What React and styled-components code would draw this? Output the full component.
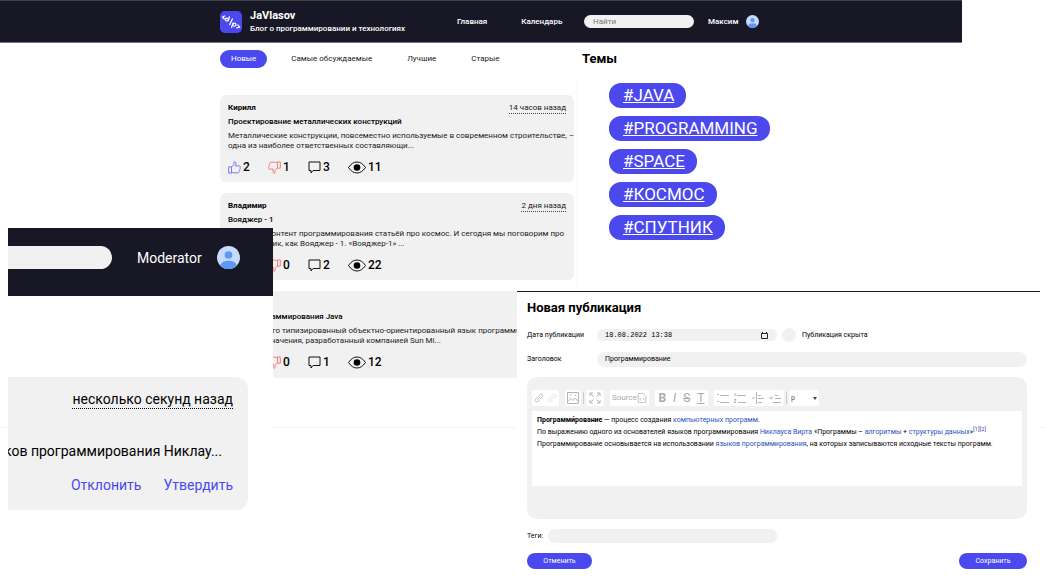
import React from "react";
import styled, { createGlobalStyle } from "styled-components";

const ink = "#181725";
const accent = "#4b49ed";
const soft = "#f1f1f1";

const GlobalStyle = createGlobalStyle`
  * { box-sizing: border-box; }
  body {
    margin: 0;
    background: #fff;
    color: #000;
    font-family: Roboto, "Liberation Sans", sans-serif;
    font-size: 8px;
    line-height: 10px;
  }
  button, input, select, textarea { font: inherit; color: inherit; }
  h1, h2, h3, p { margin: 0; }
`;

const Collage = styled.div`
  position: relative;
  min-height: 100vh;
  overflow: hidden;
`;

/* ---------- Blog window ---------- */

const BlogHeader = styled.header`
  display: flex;
  align-items: center;
  height: 43px;
  margin-right: 84px;
  padding-left: 220px;
  background: ${ink};
  border-top: 1px solid #3f3f46;
  border-bottom: 1px solid #77768a;
  color: #fff;
`;

const Brand = styled.div`
  display: flex;
  align-items: center;
  gap: 8px;
  width: 237px;
`;

const BrandName = styled.h1`
  font-size: 11px;
  line-height: 14px;
  font-weight: 700;
`;

const Tagline = styled.p`
  line-height: 12px;
  font-weight: 500;
`;

const Nav = styled.nav`
  display: flex;
  gap: 34px;
  width: 127px;
`;

const NavLink = styled.a`
  color: #fff;
  text-decoration: none;
  font-weight: 500;
`;

const Search = styled.input`
  width: 110px;
  height: 13px;
  padding: 0 9px;
  border: 0;
  border-radius: 7px;
  background: ${soft};
  &::placeholder { color: #77777f; opacity: 1; }
`;

const UserLink = styled.a`
  display: flex;
  align-items: center;
  gap: 8px;
  margin-left: 14px;
  color: #fff;
  text-decoration: none;
  font-weight: 500;
`;

const Columns = styled.div`
  display: flex;
  margin-right: 84px;
  padding: 7px 0 0 220px;
`;

const Feed = styled.main`
  width: 358px;
  flex: none;
`;

const Tabs = styled.div`
  display: flex;
  gap: 13px;
`;

const Tab = styled.button`
  height: 18px;
  padding: 0 11px;
  border: 0;
  border-radius: 9px;
  background: ${(p) => (p.$active ? accent : "transparent")};
  color: ${(p) => (p.$active ? "#fff" : "#222")};
`;

const Posts = styled.div`
  display: flex;
  flex-direction: column;
  gap: 11px;
  margin-top: 13px;
  padding: 14px 3px 49px 0;
  border-right: 1px solid #f6f6f6;
`;

const Post = styled.article`
  height: 87px;
  padding: 7px 8px;
  border-radius: 6px;
  background: ${soft};
`;

const PostHead = styled.div`
  display: flex;
  justify-content: space-between;
  min-height: 11px;
  line-height: 11px;
  font-weight: 700;
`;

const PostDate = styled.time`
  border-bottom: 1px dotted #444;
  font-weight: 400;
  color: #222;
`;

const PostTitle = styled.h2`
  margin-top: 3px;
  font-size: 8px;
  line-height: 10px;
  font-weight: 500;
`;

const PostText = styled.p`
  margin-top: 4px;
  line-height: 10px;
  color: #222;
  white-space: nowrap;
`;

const Stats = styled.div`
  display: flex;
  align-items: center;
  margin-top: 8px;
  font-size: 12px;
  line-height: 16px;
  font-weight: 500;
`;

const Stat = styled.span`
  display: flex;
  align-items: center;
  gap: 2px;
  width: 40px;
`;

const Themes = styled.aside`
  padding-left: 4px;
`;

const ThemesTitle = styled.h2`
  font-size: 13px;
  line-height: 18px;
  font-weight: 700;
`;

const TagList = styled.div`
  display: flex;
  flex-direction: column;
  align-items: flex-start;
  gap: 8px;
  padding: 15px 0 0 27px;
`;

const Tag = styled.a`
  padding: 0 12px 0 14px;
  border-radius: 12px;
  background: ${accent};
  color: #fff;
  font-size: 17px;
  line-height: 25px;
`;

const FooterLine = styled.div`
  border-top: 1px solid #f4f4f4;
`;

/* ---------- Moderation window ---------- */

const ModerationWindow = styled.section`
  position: absolute;
  left: 8px;
  top: 228px;
  width: 265px;
  padding-bottom: 20px;
  background: #fff;
  font-size: 14px;
  line-height: 18px;
`;

const ModerationBar = styled.header`
  display: flex;
  align-items: flex-start;
  height: 68px;
  padding-top: 18px;
  background: ${ink};
  color: #fff;
`;

const WideSearch = styled.input`
  width: 104px;
  height: 23px;
  border: 0;
  border-radius: 0 12px 12px 0;
  background: ${soft};
`;

const Moderator = styled.a`
  display: flex;
  align-items: center;
  gap: 15px;
  margin-left: 25px;
  color: #fff;
  text-decoration: none;
`;

const PendingPost = styled.article`
  display: flex;
  flex-direction: column;
  align-items: flex-end;
  margin: 81px 25px 0 0;
  padding: 14px 15px 16px 0;
  border-radius: 0 12px 12px 0;
  background: ${soft};
  overflow: hidden;
`;

const PendingDate = styled.time`
  border-bottom: 1px dotted #000;
  line-height: 17px;
`;

const PendingText = styled.p`
  align-self: stretch;
  display: flex;
  justify-content: flex-end;
  margin-top: 33px;
  padding-right: 11px;
  white-space: nowrap;
`;

const Decisions = styled.div`
  display: flex;
  gap: 22px;
  margin-top: 16px;
`;

const Decision = styled.button`
  padding: 0;
  border: 0;
  background: none;
  color: ${accent};
`;

/* ---------- Publication editor window ---------- */

const EditorWindow = styled.section`
  position: absolute;
  left: 517px;
  right: 6px;
  top: 291px;
  bottom: 0;
  padding: 8px 13px 0 10px;
  border-top: 1px solid ${ink};
  background: #fff;
  font-size: 7px;
`;

const EditorTitle = styled.h2`
  font-size: 13px;
  line-height: 16px;
  font-weight: 700;
`;

const FieldRow = styled.div`
  display: flex;
  align-items: center;
  height: 16px;
  margin-top: ${(p) => p.$top}px;
`;

const FieldLabel = styled.label`
  width: ${(p) => p.$width}px;
  flex: none;
`;

const Field = styled.input`
  width: ${(p) => p.$width || "100%"};
  height: ${(p) => p.$height || 15}px;
  padding: 0 8px;
  border: 0;
  border-radius: 8px;
  background: ${soft};
`;

const DateField = styled.div`
  display: flex;
  align-items: center;
  width: 180px;
  height: 12px;
  padding-right: 9px;
  border-radius: 6px;
  background: ${soft};
  input {
    flex: 1;
    min-width: 0;
    padding: 0 8px;
    border: 0;
    background: none;
    font-family: "Liberation Mono", monospace;
  }
`;

const HiddenToggle = styled.label`
  display: flex;
  align-items: center;
  gap: 6px;
  margin-left: 5px;
  input {
    appearance: none;
    width: 14px;
    height: 14px;
    margin: 0;
    border-radius: 50%;
    background: ${soft};
  }
`;

const RichEditor = styled.div`
  height: 142px;
  margin-top: 10px;
  padding: 13px 5px 0;
  border-radius: 10px;
  background: ${soft};
`;

const Toolbar = styled.div`
  display: flex;
  align-items: center;
  height: 16px;
  color: #aaa;
`;

const ToolGroup = styled.div`
  display: flex;
  align-items: center;
  justify-content: space-around;
  width: ${(p) => p.$width}px;
  height: 16px;
  margin-right: ${(p) => p.$gap || 0}px;
  border-radius: 2px;
  background: #fff;
`;

const Tool = styled.button`
  display: flex;
  align-items: center;
  padding: 0;
  border: 0;
  background: none;
  color: #aaa;
  font-size: ${(p) => p.$size || 8}px;
`;

const Divider = styled.span`
  width: 1px;
  height: 12px;
  margin-right: 2px;
  background: #ccc;
`;

const StyleSelect = styled.select`
  appearance: none;
  width: 18px;
  padding: 0;
  border: 0;
  background: none;
  color: #555;
`;

const Document = styled.div`
  height: 75px;
  margin-top: 5px;
  padding: 3px 5px;
  background: #fff;
  line-height: 12px;
  white-space: nowrap;
`;

const DocLink = styled.a`
  color: #2a52be;
  text-decoration: none;
`;

const Ref = styled.sup`
  line-height: 0;
  font-size: 6px;
  color: #4f3fb5;
`;

const Actions = styled.div`
  display: flex;
  justify-content: space-between;
  margin-top: 9px;
`;

const Action = styled.button`
  height: 16px;
  padding: 0;
  width: ${(p) => p.$width}px;
  border: 0;
  border-radius: 8px;
  background: ${accent};
  color: #fff;
`;

/* ---------- Drawings ---------- */

const Logo = () => (
  <svg width="22" height="22" viewBox="0 0 23 23" aria-hidden="true">
    <rect width="23" height="23" rx="5" fill={accent} />
    <g fill="none" stroke="#fff" strokeWidth="1.3" strokeLinecap="round" strokeLinejoin="round">
      <path d="M5 5.2 2.500 6.300 4.500 8.300" />
      <circle cx="7.200" cy="9" r="1.600" />
      <path d="M8.700 10 9.900 6M10.200 14.200 13 8.200" />
      <path d="M13.500 12.600 12.200 17" />
      <circle cx="15.100" cy="14.300" r="1.600" />
      <path d="M18.600 14.600 20.600 17 17.600 17.600" />
    </g>
  </svg>
);

const Avatar = ({ size }) => (
  <svg width={size} height={size} viewBox="0 0 24 24" aria-hidden="true">
    <clipPath id={`avatar${size}`}>
      <circle cx="12" cy="12" r="12" />
    </clipPath>
    <g clipPath={`url(#avatar${size})`}>
      <rect width="24" height="24" fill="#c7dbff" />
      <circle cx="12" cy="9.400" r="4" fill="#5b98f8" />
      <path d="M3.500 20.500C4.500 16.600 8 15.400 12 15.400s7.500 1.200 8.500 5.100L17 24H7Z" fill="#5b98f8" />
    </g>
  </svg>
);

const Thumb = ({ down }) => (
  <svg width="13" height="13" viewBox="0 0 13 13" aria-hidden="true">
    <g
      fill="none"
      stroke={down ? "#f07f7f" : "#7b7af0"}
      strokeLinejoin="round"
      transform={down ? "rotate(180 6.500 6.500)" : undefined}
    >
      <path d="M.7 5.800h2.800v6.300H.7ZM3.500 6.200 5.900 3.600 6 1.200C6.200.3 8 .5 8 2.300L7.600 4.900h3.900c1 0 .9 1.300.6 1.800.3.600.1 1.300-.3 1.600.2.700 0 1.300-.5 1.600.1.800-.3 1.900-1.300 1.900H5.600L3.500 11.200" />
    </g>
  </svg>
);

const Bubble = () => (
  <svg width="13" height="13" viewBox="0 0 13 13" aria-hidden="true">
    <path d="M1 1h11v8.500H5L3 12V9.500H1Z" fill="none" stroke="#111" strokeLinejoin="round" />
  </svg>
);

const Eye = () => (
  <svg width="18" height="13" viewBox="0 0 18 13" aria-hidden="true">
    <path d="M.5 6.500C3 2.800 5.800 1 9 1s6 1.800 8.500 5.500C15 10.200 12.200 12 9 12S3 10.200.5 6.500Z" fill="none" stroke="#111" />
    <circle cx="9" cy="6.500" r="3.300" fill="#000" />
  </svg>
);

const Calendar = () => (
  <svg width="7" height="7" viewBox="0 0 7 7" aria-hidden="true">
    <path d="M.5 1.500h6v5h-6ZM1.500 0v1.500M5.500 0v1.500" fill="none" stroke="#222" />
  </svg>
);

const toolPaths = {
  link: "M4 8 8 4M5 4 7.500 1.800C9 .5 11.500 2.500 10.200 4.500L8 7M7 8 4.500 10.200C2.500 11.500.5 9.500 1.800 7.500L4 5",
  image: "M.5.5h11v11H.5ZM1 9.500 4 6.500 6 8.500 8 6 11.500 9.500M3 3h1.500M8 3.500h1",
  expand: "M1 4V1H4M1 1 4.500 4.500M8 1h3V4M11 1 7.500 4.500M1 8v3H4M1 11 4.500 7.500M8 11h3V8M11 11 7.500 7.500",
  page: "M1.500.5H7L10.500 4V11.500H1.500ZM4.500 6 3.500 7.500 4.500 9M7.500 6 8.500 7.500 7.500 9",
  bullets: "M0 2.500H2M3 3.500H12M0 9.500H2M3 10.500H12",
  numbers: "M1 1V4M3 3.500H12M0 7.500H2L0 10.500H2M4 10.500H12",
  outdent: "M0 6H3M4.500 0V12M6 3.500H9M6 6.500H12M6 10.500H10",
  indent: "M0 6H3M2 4.500 3.500 6 2 7.500M6 3.500H9M6 6.500H12M4 10.500H12",
};

const ToolIcon = ({ name, faint, size = 12 }) => (
  <svg width={size} height={size} viewBox="0 0 12 12" aria-hidden="true">
    <path d={toolPaths[name]} fill="none" stroke={faint ? "#ddd" : "#b4b4b4"} />
  </svg>
);

/* ---------- Content ---------- */

const posts = [
  {
    author: "Кирилл",
    date: "14 часов назад",
    title: "Проектирование металлических конструкций",
    lines: [
      "Металлические конструкции, повсеместно используемые в современном строительстве, –",
      "одна из наиболее ответственных составляющи...",
    ],
    stats: [2, 1, 3, 11],
  },
  {
    author: "Владимир",
    date: "2 дня назад",
    title: "Вояджер - 1",
    lines: [
      "Разбавим контент программирования статьёй про космос. И сегодня мы поговорим про",
      "такой спутник, как Вояджер - 1. «Вояджер-1» ...",
    ],
    stats: [0, 0, 2, 22],
  },
  {
    title: "Язык программирования Java",
    lines: [
      "Java — строго типизированный объектно-ориентированный язык программирования",
      "общего назначения, разработанный компанией Sun Mi...",
    ],
    stats: [0, 0, 1, 12],
  },
];

const tags = ["#JAVA", "#PROGRAMMING", "#SPACE", "#КОСМОС", "#СПУТНИК"];

const PostCard = ({ post }) => (
  <Post>
    <PostHead>
      <span>{post.author}</span>
      {post.date && <PostDate>{post.date}</PostDate>}
    </PostHead>
    <PostTitle>{post.title}</PostTitle>
    <PostText>
      {post.lines[0]}
      <br />
      {post.lines[1]}
    </PostText>
    <Stats>
      <Stat><Thumb />{post.stats[0]}</Stat>
      <Stat><Thumb down />{post.stats[1]}</Stat>
      <Stat><Bubble />{post.stats[2]}</Stat>
      <Stat><Eye />{post.stats[3]}</Stat>
    </Stats>
  </Post>
);

const Blog = () => (
  <>
    <BlogHeader>
      <Brand>
        <Logo />
        <div>
          <BrandName>JaVlasov</BrandName>
          <Tagline>Блог о программировании и технологиях</Tagline>
        </div>
      </Brand>
      <Nav>
        <NavLink href="#main">Главная</NavLink>
        <NavLink href="#calendar">Календарь</NavLink>
      </Nav>
      <Search type="search" placeholder="Найти" aria-label="Найти" />
      <UserLink href="#profile">
        Максим
        <Avatar size={13} />
      </UserLink>
    </BlogHeader>
    <Columns>
      <Feed>
        <Tabs>
          <Tab $active>Новые</Tab>
          <Tab>Самые обсуждаемые</Tab>
          <Tab>Лучшие</Tab>
          <Tab>Старые</Tab>
        </Tabs>
        <Posts>
          {posts.map((post) => (
            <PostCard key={post.title} post={post} />
          ))}
        </Posts>
      </Feed>
      <Themes>
        <ThemesTitle>Темы</ThemesTitle>
        <TagList>
          {tags.map((tag) => (
            <Tag key={tag} href="#tag">{tag}</Tag>
          ))}
        </TagList>
      </Themes>
    </Columns>
    <FooterLine />
  </>
);

const Moderation = () => (
  <ModerationWindow>
    <ModerationBar>
      <WideSearch type="search" aria-label="Поиск" />
      <Moderator href="#moderator">
        Moderator
        <Avatar size={23} />
      </Moderator>
    </ModerationBar>
    <PendingPost>
      <PendingDate>несколько секунд назад</PendingDate>
      <PendingText>ков программирования Никлау...</PendingText>
      <Decisions>
        <Decision>Отклонить</Decision>
        <Decision>Утвердить</Decision>
      </Decisions>
    </PendingPost>
  </ModerationWindow>
);

const Editor = () => (
  <EditorWindow>
    <EditorTitle>Новая публикация</EditorTitle>
    <FieldRow $top={11}>
      <FieldLabel htmlFor="date" $width={70}>Дата публикации</FieldLabel>
      <DateField>
        <input id="date" defaultValue="18.08.2022 13:38" />
        <Calendar />
      </DateField>
      <HiddenToggle>
        <input type="checkbox" />
        Публикация скрыта
      </HiddenToggle>
    </FieldRow>
    <FieldRow $top={8}>
      <FieldLabel htmlFor="title" $width={70}>Заголовок</FieldLabel>
      <Field id="title" defaultValue="Программирование" />
    </FieldRow>
    <RichEditor>
      <Toolbar>
        <ToolGroup $width={27} $gap={6}>
          <Tool aria-label="Ссылка"><ToolIcon name="link" size={10} /></Tool>
          <Tool aria-label="Убрать ссылку"><ToolIcon name="link" size={10} faint /></Tool>
        </ToolGroup>
        <ToolGroup $width={16} $gap={2}>
          <Tool aria-label="Изображение"><ToolIcon name="image" /></Tool>
        </ToolGroup>
        <Divider />
        <ToolGroup $width={18} $gap={6}>
          <Tool aria-label="Развернуть"><ToolIcon name="expand" /></Tool>
        </ToolGroup>
        <ToolGroup $width={39} $gap={6}>
          <Tool>Source<ToolIcon name="page" size={10} /></Tool>
        </ToolGroup>
        <ToolGroup $width={53} $gap={6}>
          <Tool $size={12}><b>B</b></Tool>
          <Tool $size={12}><i>I</i></Tool>
          <Tool $size={12}><s>S</s></Tool>
          <Tool $size={12}><u>T</u></Tool>
        </ToolGroup>
        <ToolGroup $width={70} $gap={2}>
          <Tool aria-label="Маркеры"><ToolIcon name="bullets" /></Tool>
          <Tool aria-label="Нумерация"><ToolIcon name="numbers" /></Tool>
          <Tool aria-label="Уменьшить отступ"><ToolIcon name="outdent" /></Tool>
          <Tool aria-label="Увеличить отступ"><ToolIcon name="indent" /></Tool>
        </ToolGroup>
        <Divider />
        <ToolGroup $width={30}>
          <StyleSelect aria-label="Стиль"><option>p</option></StyleSelect>
          <svg width="4" height="3" viewBox="0 0 4 3" aria-hidden="true"><path d="M0 0H4L2 3Z" fill="#444" /></svg>
        </ToolGroup>
      </Toolbar>
      <Document>
        <p><b>Программи́рование</b> — процесс создания <DocLink href="#pc">компьютерных программ</DocLink>.</p>
        <p>По выражению одного из основателей языков программирования <DocLink href="#wirth">Никлауса Вирта</DocLink> «Программы – <DocLink href="#alg">алгоритмы</DocLink> + <DocLink href="#data">структуры данных</DocLink>»<Ref>[1][2]</Ref></p>
        <p>Программирование основывается на использовании <DocLink href="#lang">языков программирования</DocLink>, на которых записываются исходные тексты программ.</p>
      </Document>
    </RichEditor>
    <FieldRow $top={9}>
      <FieldLabel htmlFor="tags" $width={21}>Теги:</FieldLabel>
      <Field id="tags" $width="229px" $height={14} />
    </FieldRow>
    <Actions>
      <Action $width={65}>Отменить</Action>
      <Action $width={68}>Сохранить</Action>
    </Actions>
  </EditorWindow>
);

const App = () => (
  <>
    <GlobalStyle />
    <Collage>
      <Blog />
      <Moderation />
      <Editor />
    </Collage>
  </>
);

export default App;
